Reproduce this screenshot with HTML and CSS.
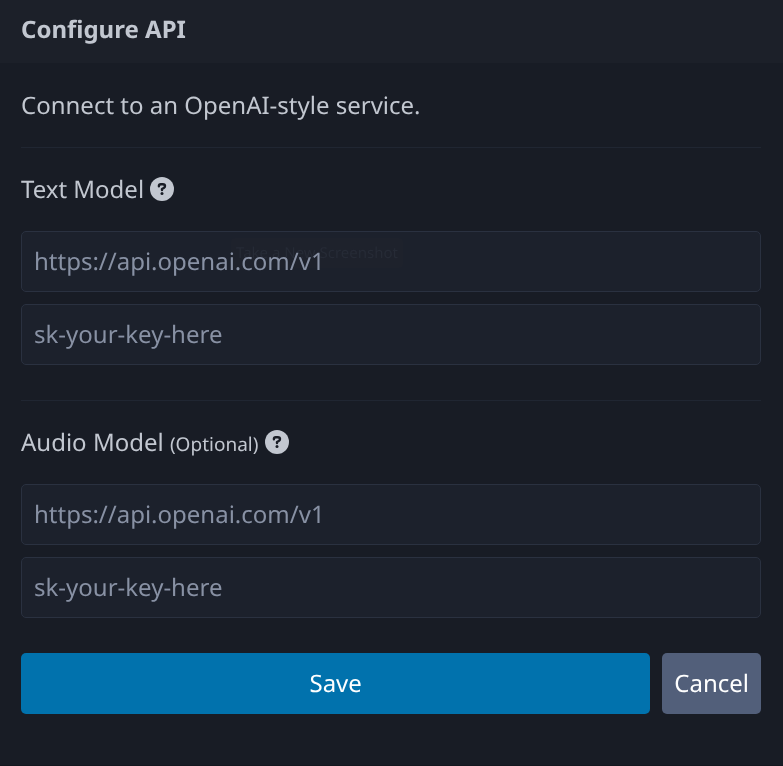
FILE: index.html
```html
<!DOCTYPE html>
<html lang="en">
<head>
  <meta charset="UTF-8" />
  <meta name="viewport" content="width=device-width, initial-scale=1" />
  <title>Configure API</title>
  <link rel="stylesheet" href="styles.css">
</head>
<body>

<article class="dialog">
  <header class="dialog-header">
    <h1>Configure API</h1>
  </header>

  <form class="dialog-body">
    <p class="intro">Connect to an OpenAI-style service.</p>

    <hr />

    <section class="model">
      <h2 id="text-model">Text Model
        <svg class="help" viewBox="0 0 24 24" aria-hidden="true">
          <circle cx="12" cy="12" r="12" />
          <path d="M8.9 9.2V8.9C8.9 7.7 9.8 7.2 10.8 7.2h2c1.3 0 2.2 .8 2.2 1.9 0 .9-.5 1.5-1.2 1.9L12 12v1" />
          <rect x="10.5" y="15.1" width="3" height="3" rx="1.5" />
        </svg>
      </h2>
      <div class="field">
        <input type="text" aria-labelledby="text-model" placeholder="https://api.openai.com/v1" />
        <span class="tooltip">Take a New Screenshot</span>
      </div>
      <input type="text" aria-labelledby="text-model" placeholder="sk-your-key-here" />
    </section>

    <hr />

    <section class="model">
      <h2 id="audio-model">Audio Model <small>(Optional)</small>
        <svg class="help" viewBox="0 0 24 24" aria-hidden="true">
          <circle cx="12" cy="12" r="12" />
          <path d="M8.9 9.2V8.9C8.9 7.7 9.8 7.2 10.8 7.2h2c1.3 0 2.2 .8 2.2 1.9 0 .9-.5 1.5-1.2 1.9L12 12v1" />
          <rect x="10.5" y="15.1" width="3" height="3" rx="1.5" />
        </svg>
      </h2>
      <input type="text" aria-labelledby="audio-model" placeholder="https://api.openai.com/v1" />
      <input type="text" aria-labelledby="audio-model" placeholder="sk-your-key-here" />
    </section>

    <div class="actions">
      <button type="submit" class="button save">Save</button>
      <button type="button" class="button cancel">Cancel</button>
    </div>
  </form>
</article>

</body>
</html>
```

FILE: styles.css
```css
* {
  box-sizing: border-box;
}

body {
  margin: 0;
  background: #13171f;
  color: #c2c7d0;
  font-family: "Noto Sans", sans-serif;
  font-size: 24px;
  line-height: 36px;
  text-rendering: geometricPrecision;
}

h1, h2, p {
  margin: 0;
  font-size: 24px;
}

.dialog {
  background: #181c25;
}

.dialog-header {
  padding: 12px 22px 15px 21px;
  background: #1c2029;
}

.dialog-header h1 {
  font-weight: 700;
}

.dialog-body {
  padding: 25px 22px 51px 21px;
}

hr {
  margin: 23px 0 24px;
  border: 0;
  border-top: 1px solid #202632;
}

.model {
  display: flex;
  flex-direction: column;
  gap: 12px;
  margin-bottom: 35px;
}

.model h2 {
  margin-bottom: 11px;
  font-weight: 400;
}

.model small {
  font-size: 19px;
  line-height: 24px;
}

.help {
  width: 24px;
  height: 24px;
  vertical-align: -3px;
  fill: #c2c7d0;
}

.help path {
  fill: none;
  stroke: #181c25;
  stroke-width: 2.4;
  stroke-linecap: round;
  stroke-linejoin: round;
}

.help rect {
  fill: #181c25;
}

.field {
  display: flex;
  position: relative;
}

input {
  width: 100%;
  height: 61px;
  padding: 0 12px 1px;
  border: 1px solid #2a3140;
  border-radius: 5px;
  background: #1c212c;
  color: #c2c7d0;
  font: inherit;
  text-rendering: inherit;
}

input::placeholder {
  color: #8891a4;
  opacity: 1;
}

/* tooltip, almost faded out */
.tooltip {
  position: absolute;
  top: 7px;
  left: 210px;
  padding: 3px 5px;
  border-radius: 4px;
  background: #1e222c;
  color: #262b36;
  font-size: 15px;
  line-height: 24px;
  pointer-events: none;
  mix-blend-mode: lighten;
}

.actions {
  display: flex;
  gap: 12px;
}

.button {
  height: 61px;
  padding: 0 12px;
  border: 0;
  border-radius: 5px;
  color: #ffffff;
  font: inherit;
  text-rendering: inherit;
  cursor: pointer;
}

.save {
  flex: 1;
  background: #0172ad;
}

.cancel {
  background: #525f7a;
}
```
